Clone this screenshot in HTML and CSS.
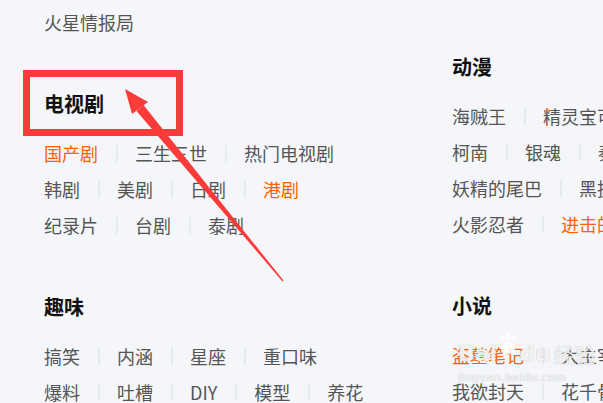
FILE: index.html
```html
<!DOCTYPE html>
<html lang="zh-CN">
<head>
  <meta charset="UTF-8" />
  <title>分类导航</title>
  <link rel="stylesheet" href="styles.css">
</head>
<body>

  <div class="page">
    <div class="col col-left">
      <div class="section">
        <div class="row">
          <span class="item">火星情报局</span>
        </div>
      </div>

      <div class="section">
        <h3 class="title">电视剧</h3>
        <div class="row">
          <span class="item hot">国产剧</span>
          <span class="item">三生三世</span>
          <span class="item">热门电视剧</span>
        </div>
        <div class="row">
          <span class="item">韩剧</span>
          <span class="item">美剧</span>
          <span class="item">日剧</span>
          <span class="item hot">港剧</span>
        </div>
        <div class="row">
          <span class="item">纪录片</span>
          <span class="item">台剧</span>
          <span class="item">泰剧</span>
        </div>
      </div>

      <div class="section">
        <h3 class="title">趣味</h3>
        <div class="row">
          <span class="item">搞笑</span>
          <span class="item">内涵</span>
          <span class="item">星座</span>
          <span class="item">重口味</span>
        </div>
        <div class="row">
          <span class="item">爆料</span>
          <span class="item">吐槽</span>
          <span class="item">DIY</span>
          <span class="item">模型</span>
          <span class="item">养花</span>
        </div>
      </div>
    </div>

    <div class="col col-right">
      <div class="section">
        <h3 class="title">动漫</h3>
        <div class="row">
          <span class="item">海贼王</span>
          <span class="item">精灵宝可梦</span>
        </div>
        <div class="row">
          <span class="item">柯南</span>
          <span class="item">银魂</span>
          <span class="item">秦时明月</span>
        </div>
        <div class="row">
          <span class="item">妖精的尾巴</span>
          <span class="item">黑执事</span>
        </div>
        <div class="row">
          <span class="item">火影忍者</span>
          <span class="item hot">进击的巨人</span>
        </div>
      </div>

      <div class="section">
        <h3 class="title">小说</h3>
        <div class="row">
          <span class="item hot">盗墓笔记</span>
          <span class="item">大主宰</span>
        </div>
        <div class="row">
          <span class="item">我欲封天</span>
          <span class="item">花千骨</span>
        </div>
      </div>
    </div>
  </div>

  <!-- 标注：红框 + 箭头 -->
  <div class="mark-box"></div>
  <svg class="mark-arrow" width="603" height="403" viewBox="0 0 603 403">
    <polygon points="125,89 132,114 148,102" fill="#fb3a3a" />
    <polygon points="136.5,110.9 143.5,105.1 283.5,280.6 282.5,281.4" fill="#fb3a3a" />
  </svg>

  <!-- 水印 -->
  <div class="watermark">
    <div class="wm-top">
      <span class="wm-bai">Bai</span>
      <svg class="wm-paw" width="22" height="24" viewBox="0 0 22 24">
        <ellipse cx="5" cy="6" rx="2.6" ry="3.4" />
        <ellipse cx="11" cy="3.6" rx="2.6" ry="3.4" />
        <ellipse cx="17" cy="6" rx="2.6" ry="3.4" />
        <path d="M4 19 C4 13 8 10 11 10 C14 10 18 13 18 19 C18 23 4 23 4 19 Z" />
      </svg>
      <span class="wm-du">du</span>
      <span class="wm-jy">经验</span>
    </div>
    <div class="wm-url">jingyan.baidu.com</div>
  </div>

</body>
</html>
```

FILE: styles.css
```css
body {
  margin: 0;
  background-color: #f4f6f9;
  font-family: "Noto Sans CJK SC", "Noto Sans", sans-serif;
  overflow: hidden;
  width: 603px;
  height: 403px;
  position: relative;
}

.page {
  display: grid;
  grid-template-columns: 408px 1fr;
  padding-left: 44px;
}

.col-left {
  padding-top: 4px;
}

.col-right {
  padding-top: 52px;
  overflow: hidden;
}

.section + .section {
  margin-top: 49px;
}

.title {
  margin: 0 0 16px;
  font-size: 20px;
  line-height: 30px;
  font-weight: bold;
  color: #111;
}

.row {
  display: flex;
  align-items: center;
  height: 36px;
  font-size: 18px;
  color: #555;
  white-space: nowrap;
}

.item {
  display: flex;
  align-items: center;
}

.item + .item::before {
  content: "";
  display: block;
  width: 2px;
  height: 17px;
  margin: 0 17px 0 18px;
  background-color: #e6e9ed;
}

.hot {
  color: #ff6000;
}

/* 标注 */
.mark-box {
  position: absolute;
  left: 23px;
  top: 70px;
  width: 146px;
  height: 52px;
  border: 7px solid #fb3a3a;
}

.mark-arrow {
  position: absolute;
  left: 0;
  top: 0;
}

/* 水印 */
.watermark {
  position: absolute;
  left: 458px;
  top: 334px;
  width: 140px;
  white-space: nowrap;
  color: rgba(255, 255, 255, 0.85);
  text-shadow: 0 0 1px rgba(140, 140, 140, 0.7);
}

.wm-top {
  display: flex;
  align-items: flex-end;
  height: 34px;
}

.wm-bai,
.wm-du {
  font-family: "DejaVu Sans", sans-serif;
  font-size: 22px;
  font-weight: bold;
  line-height: 28px;
}

.wm-paw {
  flex: none;
  fill: rgba(255, 255, 255, 0.8);
  margin: 0 0 12px;
}

.wm-jy {
  font-size: 21px;
  line-height: 28px;
  margin-left: 3px;
}

.wm-url {
  font-family: "DejaVu Sans", sans-serif;
  font-size: 11px;
  line-height: 14px;
  letter-spacing: 0.4px;
  margin-top: 3px;
}
```
